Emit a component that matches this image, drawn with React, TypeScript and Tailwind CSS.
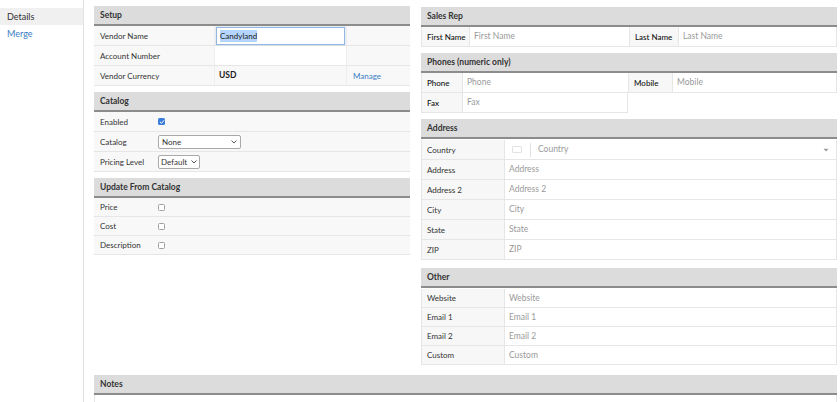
import type { ReactNode } from "react";

const Chevron = () => (
  <svg width="6" height="4" viewBox="0 0 6 4" fill="none">
    <path d="M0.8 0.8L3 3L5.2 0.8" stroke="#444" strokeWidth="0.9" strokeLinecap="round" strokeLinejoin="round" />
  </svg>
);

const Caret = () => (
  <svg width="6" height="4" viewBox="0 0 6 4">
    <path d="M0.5 0.8h5L3 3.4z" fill="#9a9a9a" />
  </svg>
);

function SectionHeader({ title }: { title: string }) {
  return (
    <div className="h-[20px] flex items-center px-[6px] bg-[#dcdcdc] border-b-2 border-[#8c8c8c] text-[8.5px] font-bold text-[#333] whitespace-nowrap">
      {title}
    </div>
  );
}

function Checkbox({ checked }: { checked?: boolean }) {
  if (checked) {
    return (
      <span className="w-[7px] h-[7px] rounded-[1.5px] bg-[#3b7ddd] flex items-center justify-center">
        <svg width="6" height="6" viewBox="0 0 6 6" fill="none">
          <path d="M1.2 3.1L2.5 4.3L4.8 1.6" stroke="white" strokeWidth="1" strokeLinecap="round" strokeLinejoin="round" />
        </svg>
      </span>
    );
  }
  return <span className="w-[7px] h-[7px] rounded-[1.5px] border border-[#a0a0a0] bg-white" />;
}

function LeftRow({ label, labelW, children, h = "h-[20px]" }: { label: string; labelW: string; children?: ReactNode; h?: string }) {
  return (
    <div className={`flex ${h} border-b border-[#e6e6e6] bg-[#f8f8f8] text-[8px] text-[#333]`}>
      <div className={`${labelW} shrink-0 flex items-center px-[6px] whitespace-nowrap`}>{label}</div>
      <div className="flex-1 flex items-center pl-[2px]">{children}</div>
    </div>
  );
}

function Label({ w, children, dark }: { w: string; children: ReactNode; dark?: boolean }) {
  return (
    <div
      className={`${w} shrink-0 flex items-center px-[5px] bg-[#f7f7f7] text-[8px] whitespace-nowrap ${
        dark ? "text-[#111] font-medium" : "text-[#333]"
      }`}
    >
      {children}
    </div>
  );
}

function Field({ placeholder, w }: { placeholder: string; w?: string }) {
  return (
    <div className={`${w ?? "flex-1"} flex items-center pl-[4px] bg-white border-l border-[#e6e6e6] text-[8.5px] text-[#9a9a9a] whitespace-nowrap`}>
      {placeholder}
    </div>
  );
}

function AddrRow({ label, placeholder, h = "h-[20px]" }: { label: string; placeholder: string; h?: string }) {
  return (
    <div className={`flex ${h} border-b border-x border-[#e6e6e6]`}>
      <Label w="w-[82px]">{label}</Label>
      <Field placeholder={placeholder} />
    </div>
  );
}

export default function App() {
  return (
    <div className="flex w-[840px] h-[402px] overflow-hidden bg-white font-['Lato','Liberation_Sans',sans-serif]">
      {/* Sidebar */}
      <aside className="w-[84px] shrink-0 border-r border-[#e2e2e2] pt-[8px] text-[9px]">
        <div className="h-[17px] flex items-center px-[7px] bg-[#f0f0f0] text-[#333]">Details</div>
        <div className="h-[17px] flex items-center px-[7px] text-[#3b7dc4]">Merge</div>
      </aside>

      {/* Main */}
      <main className="flex-1 flex flex-col pl-[10px] pr-[3px] pt-[6px]">
        <div className="flex gap-[11px]">
          {/* Left column */}
          <div className="w-[316px] flex flex-col gap-[6px]">
            <div>
              <SectionHeader title="Setup" />
              <div className="flex h-[20px] border-b border-[#e6e6e6] bg-[#f8f8f8] text-[8px] text-[#333]">
                <div className="w-[120px] flex items-center px-[6px]">Vendor Name</div>
                <div className="w-[132px] flex items-center px-[1px] border-l border-[#eeeeee]">
                  <div className="w-full h-[18px] flex items-center px-[3px] bg-white border border-[#93b9e3] shadow-[0_0_1px_#93b9e3]">
                    <span className="bg-[#b4d5fe] text-[#222]">Candyland</span>
                  </div>
                </div>
                <div className="flex-1 border-l border-[#eeeeee]" />
              </div>
              <div className="flex h-[20px] border-b border-[#e6e6e6] bg-[#f8f8f8] text-[8px] text-[#333]">
                <div className="w-[120px] flex items-center px-[6px]">Account Number</div>
                <div className="w-[132px] bg-white border-l border-[#eeeeee]" />
                <div className="flex-1 border-l border-[#eeeeee]" />
              </div>
              <div className="flex h-[20px] border-b border-[#e6e6e6] bg-[#f8f8f8] text-[8px] text-[#333]">
                <div className="w-[120px] flex items-center px-[6px]">Vendor Currency</div>
                <div className="w-[132px] flex items-center pl-[4px] font-bold text-[8.5px] text-[#222] border-l border-[#eeeeee]">USD</div>
                <div className="flex-1 flex items-center pl-[6px] text-[#3b7dc4] border-l border-[#eeeeee]">Manage</div>
              </div>
            </div>

            <div>
              <SectionHeader title="Catalog" />
              <LeftRow label="Enabled" labelW="w-[62px]">
                <Checkbox checked />
              </LeftRow>
              <LeftRow label="Catalog" labelW="w-[62px]">
                <div className="w-[83px] h-[14px] flex items-center justify-between px-[3px] bg-white border border-[#a9a9a9] rounded-[2px]">
                  <span>None</span>
                  <Chevron />
                </div>
              </LeftRow>
              <LeftRow label="Pricing Level" labelW="w-[62px]">
                <div className="w-[42px] h-[14px] flex items-center justify-between px-[2px] bg-white border border-[#a9a9a9] rounded-[2px]">
                  <span>Default</span>
                  <Chevron />
                </div>
              </LeftRow>
            </div>

            <div>
              <SectionHeader title="Update From Catalog" />
              <LeftRow label="Price" labelW="w-[62px]" h="h-[19px]">
                <Checkbox />
              </LeftRow>
              <LeftRow label="Cost" labelW="w-[62px]" h="h-[19px]">
                <Checkbox />
              </LeftRow>
              <LeftRow label="Description" labelW="w-[62px]" h="h-[19px]">
                <Checkbox />
              </LeftRow>
            </div>
          </div>

          {/* Right column */}
          <div className="w-[416px] flex flex-col gap-[6px] pt-[1px]">
            <div>
              <SectionHeader title="Sales Rep" />
              <div className="flex h-[20px] border-b border-x border-[#e6e6e6]">
                <Label w="w-[47px]" dark>First Name</Label>
                <Field placeholder="First Name" w="w-[160px]" />
                <div className="border-l border-[#e6e6e6] flex">
                  <Label w="w-[48px]" dark>Last Name</Label>
                </div>
                <Field placeholder="Last Name" />
              </div>
            </div>

            <div>
              <SectionHeader title="Phones (numeric only)" />
              <div className="flex h-[20px] border-b border-x border-[#e6e6e6]">
                <Label w="w-[40px]" dark>Phone</Label>
                <Field placeholder="Phone" w="w-[166px]" />
                <div className="border-l border-[#e6e6e6] flex">
                  <Label w="w-[43px]" dark>Mobile</Label>
                </div>
                <Field placeholder="Mobile" />
              </div>
              <div className="flex h-[20px]">
                <div className="w-[207px] flex border-b border-x border-[#e6e6e6]">
                  <Label w="w-[40px]" dark>Fax</Label>
                  <Field placeholder="Fax" />
                </div>
              </div>
            </div>

            <div>
              <div className="h-[21px] flex flex-col">
                <SectionHeader title="Address" />
              </div>
              <div className="flex h-[20px] border-b border-x border-[#e6e6e6]">
                <Label w="w-[82px]">Country</Label>
                <div className="flex-1 flex items-center bg-white border-l border-[#e6e6e6] text-[8.5px] text-[#9a9a9a]">
                  <span className="ml-[7px] w-[10px] h-[7px] border border-[#e2e2e2] rounded-[1px]" />
                  <span className="ml-[8px] w-px h-[14px] bg-[#e2e2e2]" />
                  <span className="ml-[7px] flex-1">Country</span>
                  <span className="mr-[7px] flex items-center">
                    <Caret />
                  </span>
                </div>
              </div>
              <AddrRow label="Address" placeholder="Address" />
              <AddrRow label="Address 2" placeholder="Address 2" />
              <AddrRow label="City" placeholder="City" />
              <AddrRow label="State" placeholder="State" />
              <AddrRow label="ZIP" placeholder="ZIP" />
            </div>

            <div className="pt-[2px]">
              <div className="h-[21px] flex flex-col">
                <SectionHeader title="Other" />
              </div>
              <AddrRow label="Website" placeholder="Website" h="h-[19px]" />
              <AddrRow label="Email 1" placeholder="Email 1" h="h-[19px]" />
              <AddrRow label="Email 2" placeholder="Email 2" h="h-[19px]" />
              <AddrRow label="Custom" placeholder="Custom" h="h-[19px]" />
            </div>
          </div>
        </div>

        {/* Notes */}
        <div className="mt-[10px]">
          <SectionHeader title="Notes" />
          <div className="h-[20px] border-x border-[#e6e6e6]" />
        </div>
      </main>
    </div>
  );
}
